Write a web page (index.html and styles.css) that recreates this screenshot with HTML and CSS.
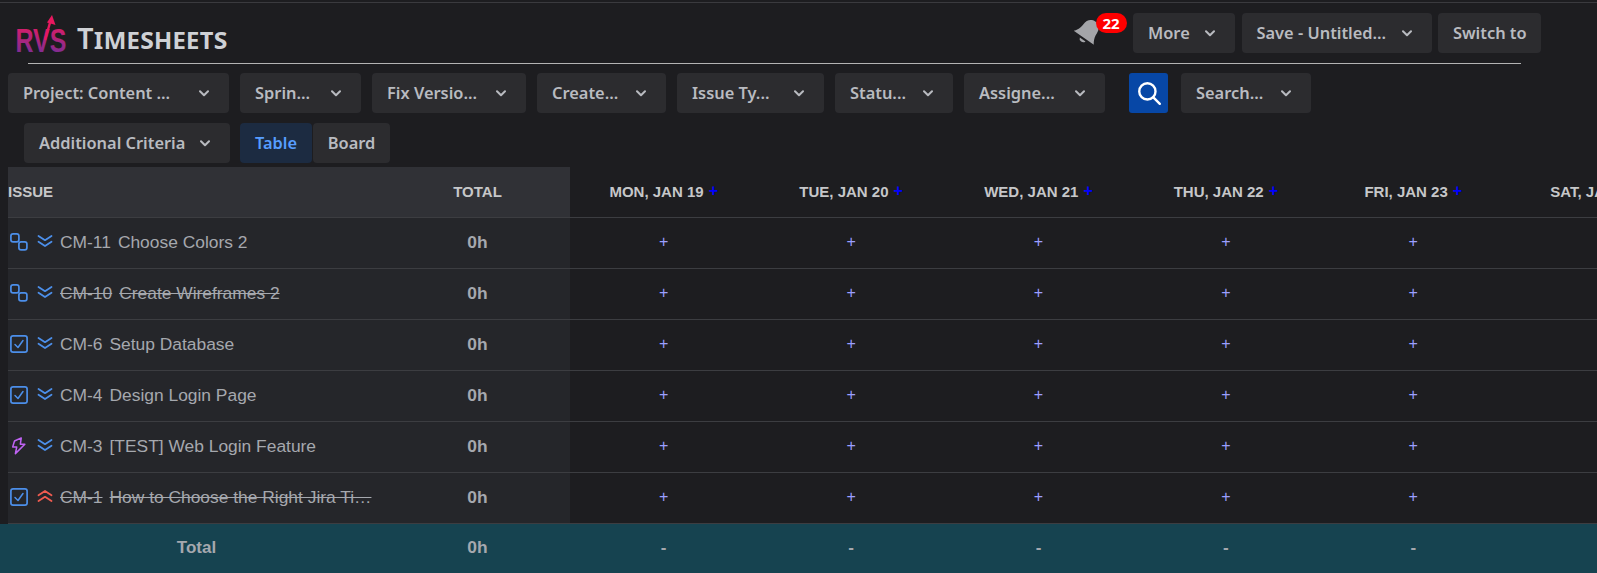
FILE: index.html
```html
<!DOCTYPE html>
<html lang="en">
<head>
<meta charset="utf-8">
<title>Timesheets</title>
<link rel="stylesheet" href="styles.css">
</head>
<body>
<svg class="sprite" width="0" height="0" aria-hidden="true">
  <defs>
    <linearGradient id="logoGrad" x1="0" y1="0" x2="0" y2="1">
      <stop offset="0" stop-color="#ea1a60"/>
      <stop offset="1" stop-color="#6a309c"/>
    </linearGradient>
    <symbol id="chev" viewBox="0 0 10 7"><path d="M1 1.200 5 5.200 9 1.200" fill="none" stroke="currentColor" stroke-width="2" stroke-linecap="round" stroke-linejoin="round"/></symbol>
    <symbol id="subtask" viewBox="0 0 18 18"><rect x="0.900" y="0.900" width="8" height="8" rx="2.200" fill="none" stroke="currentColor" stroke-width="1.700"/><rect x="8.900" y="8.900" width="8" height="8" rx="2.200" fill="none" stroke="currentColor" stroke-width="1.700"/></symbol>
    <symbol id="task" viewBox="0 0 18 18"><rect x="0.900" y="0.900" width="16.200" height="16.200" rx="2.200" fill="none" stroke="currentColor" stroke-width="1.700"/><path d="M5 9.500 8 12.500 13 5.500" fill="none" stroke="currentColor" stroke-width="1.500" stroke-linecap="round" stroke-linejoin="round"/></symbol>
    <symbol id="bolt" viewBox="0 0 18 20"><path d="M11.500 1 4 4.500 2 11h4.500L5 18.500 15.500 8H10.500Z" fill="none" stroke="currentColor" stroke-width="1.700" stroke-linejoin="round"/></symbol>
    <symbol id="down2" viewBox="0 0 16 14"><path d="M1.500 2 8 6.200l6.500-4.200M1.500 7.800 8 12l6.500-4.200" fill="none" stroke="currentColor" stroke-width="1.800" stroke-linecap="round" stroke-linejoin="round"/></symbol>
    <symbol id="up2" viewBox="0 0 16 14"><path d="M1.500 6.200 8 2l6.500 4.200M1.500 12 8 7.800 14.500 12" fill="none" stroke="currentColor" stroke-width="1.800" stroke-linecap="round" stroke-linejoin="round"/></symbol>
  </defs>
</svg>

<div class="chrome-line"></div>
<header class="topbar">
  <div class="brand">
    <svg class="logo" viewBox="0 0 54 38" width="54" height="38" role="img" aria-label="RVS">
      <text class="logo-text" x="1.500" y="37" fill="url(#logoGrad)" textLength="51" lengthAdjust="spacingAndGlyphs">RVS</text>
      <path d="M31 25 36.500 6" stroke="#e8185f" stroke-width="2.400" fill="none"/>
      <path d="M38 0 41.500 10 33 7.500Z" fill="#e8185f"/>
    </svg>
    <h1 class="brand-name">Timesheets</h1>
  </div>
  <div class="top-actions">
    <div class="bell">
      <svg viewBox="0 0 24 24" width="31" height="31" class="bell-icon"><path d="M12 1.500c-3.800 0-6.300 3-6.300 7 0 5-3.200 8.500-3.200 8.500h19s-3.200-3.500-3.200-8.500c0-4-2.500-7-6.500-7ZM9.300 18.500a2.800 2.800 0 0 0 5.400 0Z" fill="currentColor"/></svg>
      <span class="badge">22</span>
    </div>
    <button class="btn w-more">More <svg class="chev"><use href="#chev"/></svg></button>
    <button class="btn w-save">Save - Untitled... <svg class="chev"><use href="#chev"/></svg></button>
    <button class="btn w-switch">Switch to</button>
  </div>
</header>
<hr class="divider">

<div class="filters">
  <button class="btn w-project">Project: Content ... <svg class="chev"><use href="#chev"/></svg></button>
  <button class="btn w-sprint">Sprin... <svg class="chev"><use href="#chev"/></svg></button>
  <button class="btn w-fix">Fix Versio... <svg class="chev"><use href="#chev"/></svg></button>
  <button class="btn w-create">Create... <svg class="chev"><use href="#chev"/></svg></button>
  <button class="btn w-type">Issue Ty... <svg class="chev"><use href="#chev"/></svg></button>
  <button class="btn w-status">Statu... <svg class="chev"><use href="#chev"/></svg></button>
  <button class="btn w-assignee">Assigne... <svg class="chev"><use href="#chev"/></svg></button>
  <button class="search-btn" aria-label="Search">
    <svg viewBox="0 0 24 24" width="26" height="26"><circle cx="10.500" cy="10.500" r="7.500" fill="none" stroke="#fff" stroke-width="2.200"/><path d="M16 16l6 6" stroke="#fff" stroke-width="2.200" stroke-linecap="round"/></svg>
  </button>
  <button class="btn w-search">Search... <svg class="chev"><use href="#chev"/></svg></button>
</div>

<div class="filters second">
  <button class="btn w-additional">Additional Criteria <svg class="chev"><use href="#chev"/></svg></button>
  <div class="view-toggle">
    <button class="btn is-active w-table">Table</button>
    <button class="btn w-board">Board</button>
  </div>
</div>

<section class="sheet">
  <div class="row head">
    <div class="cell issue head-issue">Issue</div>
    <div class="cell total head-total">Total</div>
    <div class="cell day">Mon, Jan 19<span class="add">+</span></div>
    <div class="cell day">Tue, Jan 20<span class="add">+</span></div>
    <div class="cell day">Wed, Jan 21<span class="add">+</span></div>
    <div class="cell day">Thu, Jan 22<span class="add">+</span></div>
    <div class="cell day">Fri, Jan 23<span class="add">+</span></div>
    <div class="cell day">Sat, Jan 24<span class="add">+</span></div>
  </div>

  <div class="row">
    <div class="cell issue"><svg class="type blue"><use href="#subtask"/></svg><svg class="prio blue"><use href="#down2"/></svg><span class="key">CM-11</span><span class="summary">Choose Colors 2</span></div>
    <div class="cell total">0h</div>
    <div class="cell slot">+</div><div class="cell slot">+</div><div class="cell slot">+</div><div class="cell slot">+</div><div class="cell slot">+</div><div class="cell slot"></div>
  </div>
  <div class="row done">
    <div class="cell issue"><svg class="type blue"><use href="#subtask"/></svg><svg class="prio blue"><use href="#down2"/></svg><span class="key">CM-10</span><span class="summary">Create Wireframes 2</span></div>
    <div class="cell total">0h</div>
    <div class="cell slot">+</div><div class="cell slot">+</div><div class="cell slot">+</div><div class="cell slot">+</div><div class="cell slot">+</div><div class="cell slot"></div>
  </div>
  <div class="row">
    <div class="cell issue"><svg class="type blue"><use href="#task"/></svg><svg class="prio blue"><use href="#down2"/></svg><span class="key">CM-6</span><span class="summary">Setup Database</span></div>
    <div class="cell total">0h</div>
    <div class="cell slot">+</div><div class="cell slot">+</div><div class="cell slot">+</div><div class="cell slot">+</div><div class="cell slot">+</div><div class="cell slot"></div>
  </div>
  <div class="row">
    <div class="cell issue"><svg class="type blue"><use href="#task"/></svg><svg class="prio blue"><use href="#down2"/></svg><span class="key">CM-4</span><span class="summary">Design Login Page</span></div>
    <div class="cell total">0h</div>
    <div class="cell slot">+</div><div class="cell slot">+</div><div class="cell slot">+</div><div class="cell slot">+</div><div class="cell slot">+</div><div class="cell slot"></div>
  </div>
  <div class="row">
    <div class="cell issue"><svg class="type purple"><use href="#bolt"/></svg><svg class="prio blue"><use href="#down2"/></svg><span class="key">CM-3</span><span class="summary">[TEST] Web Login Feature</span></div>
    <div class="cell total">0h</div>
    <div class="cell slot">+</div><div class="cell slot">+</div><div class="cell slot">+</div><div class="cell slot">+</div><div class="cell slot">+</div><div class="cell slot"></div>
  </div>
  <div class="row done">
    <div class="cell issue"><svg class="type blue"><use href="#task"/></svg><svg class="prio red"><use href="#up2"/></svg><span class="key">CM-1</span><span class="summary">How to Choose the Right Jira Ti…</span></div>
    <div class="cell total">0h</div>
    <div class="cell slot">+</div><div class="cell slot">+</div><div class="cell slot">+</div><div class="cell slot">+</div><div class="cell slot">+</div><div class="cell slot"></div>
  </div>

  <div class="row foot">
    <div class="cell issue foot-label">Total</div>
    <div class="cell total">0h</div>
    <div class="cell dash">-</div><div class="cell dash">-</div><div class="cell dash">-</div><div class="cell dash">-</div><div class="cell dash">-</div><div class="cell dash"></div>
  </div>
</section>
</body>
</html>
```

FILE: styles.css
```css
* { box-sizing: border-box; }
html, body { margin: 0; height: 573px; overflow: hidden; }
body {
  background: #1d1d20;
  padding-top: 2px;
  font-family: "Noto Sans", "Open Sans", sans-serif;
  color: #b6b8bd;
  width: 1597px;
}
.sprite { position: absolute; }
.chrome-line { height: 1px; background: #3a3a3e; }

.topbar {
  display: flex;
  align-items: flex-start;
  justify-content: space-between;
  height: 40px;
  margin-top: 10px;
  padding: 0 56px 0 14px;
}
.brand { display: flex; align-items: flex-start; height: 40px; }
.logo { margin-top: 2px; flex: none; overflow: visible; }
.logo-text { font-family: "Liberation Sans", sans-serif; font-size: 33px; font-weight: 700; }
.brand-name {
  margin: 7px 0 0 9px;
  font-family: "Noto Sans", sans-serif;
  font-size: 29px;
  font-weight: 600;
  line-height: 36px;
  font-variant: small-caps;
  letter-spacing: 0.3px;
  color: #cfd1d5;
}
.top-actions { display: flex; align-items: flex-start; gap: 6.500px; }
.bell { position: relative; width: 58px; height: 40px; }
.bell-icon { position: absolute; left: 3px; top: 4px; color: #a4a5a9; transform: rotate(35deg); }
.badge {
  position: absolute; left: 27px; top: 0;
  width: 31px; height: 20px;
  background: #f00; color: #fff; border-radius: 10px;
  font-size: 15px; font-weight: 700; line-height: 20px; text-align: center;
}

.divider { width: 1493px; height: 1px; margin: 10px 0 9px 28px; border: 0; background: #b4b4b4; }

.filters { display: flex; gap: 11px; margin-left: 8px; height: 40px; }
.second { margin: 10px 0 4px 24px; gap: 10px; }

.btn {
  display: flex;
  align-items: center;
  justify-content: space-between;
  height: 40px;
  padding: 0 15px;
  background: #2c2c2f;
  border: 0;
  border-radius: 4px;
  font: 600 16.400px/20px "Noto Sans", "Open Sans", sans-serif;
  color: #b9bbc0;
  white-space: nowrap;
  flex: none;
}
.chev { width: 10px; height: 7px; margin-right: 5px; flex: none; color: #b9bbc0; }
.is-active { background: #1c2b41; color: #579dff; }
.view-toggle { display: flex; gap: 1px; }

.w-more { width: 102px; }
.w-save { width: 190px; }
.w-switch { width: 103px; }
.w-project { width: 221px; }
.w-sprint { width: 121px; }
.w-fix { width: 154px; }
.w-create { width: 129px; }
.w-type { width: 147px; }
.w-status { width: 118px; }
.w-assignee { width: 141px; }
.w-search { width: 130px; margin-left: 2px; }
.w-additional { width: 206px; }
.w-table { width: 72px; justify-content: center; }
.w-board { width: 77px; justify-content: center; }

.search-btn {
  display: flex; align-items: center; justify-content: center;
  width: 39px; height: 40px; margin-left: 13px; padding: 0;
  background: #0747a6; border: 0; border-radius: 3px; flex: none;
}

.sheet { font-family: "Liberation Sans", Arial, sans-serif; }
.row {
  display: grid;
  grid-template-columns: 377px 185px repeat(6, 187.400px);
  height: 51px;
  margin-left: 8px;
  width: 1800px;
  border-bottom: 1px solid #3c3d41;
}
.cell { display: flex; align-items: center; justify-content: center; min-width: 0; padding-bottom: 2px; }
.issue { justify-content: flex-start; background: #25262a; padding-left: 2px; color: #a5a8ae; font-size: 17.400px; }
.total { background: #25262a; font-size: 17.400px; font-weight: 700; color: #a5a8ae; }

.head-issue, .head-total { background: #303136; }
.head-issue, .head-total, .day {
  font-size: 15px; font-weight: 700; text-transform: uppercase; color: #c6c7c9;
}
.head-issue { padding-left: 0; }
.add { margin-left: 5px; color: #00f; font-size: 16px; line-height: 14px; }
.slot { font-size: 16px; color: #9b9fff; }

.type { width: 18px; height: 18px; flex: none; }
.prio { width: 16px; height: 14px; margin: 0 7px 0 9px; flex: none; position: relative; top: -1px; }
.blue { color: #4c8fea; }
.purple { color: #bf63f3; }
.red { color: #f15b50; }
.summary { margin-left: 7px; white-space: nowrap; }
.key { white-space: nowrap; }
.done .key, .done .summary { text-decoration: line-through; }

.foot {
  height: 49px; border: 0; margin-left: 0; padding-left: 8px; width: 1808px;
  background: #164350;
}
.foot .cell { background: none; }
.foot-label { justify-content: center; padding: 0 0 2px; font-size: 17px; font-weight: 700; color: #a5a8ae; }
.dash { font-size: 17px; font-weight: 700; color: #a5a8ae; }
```
